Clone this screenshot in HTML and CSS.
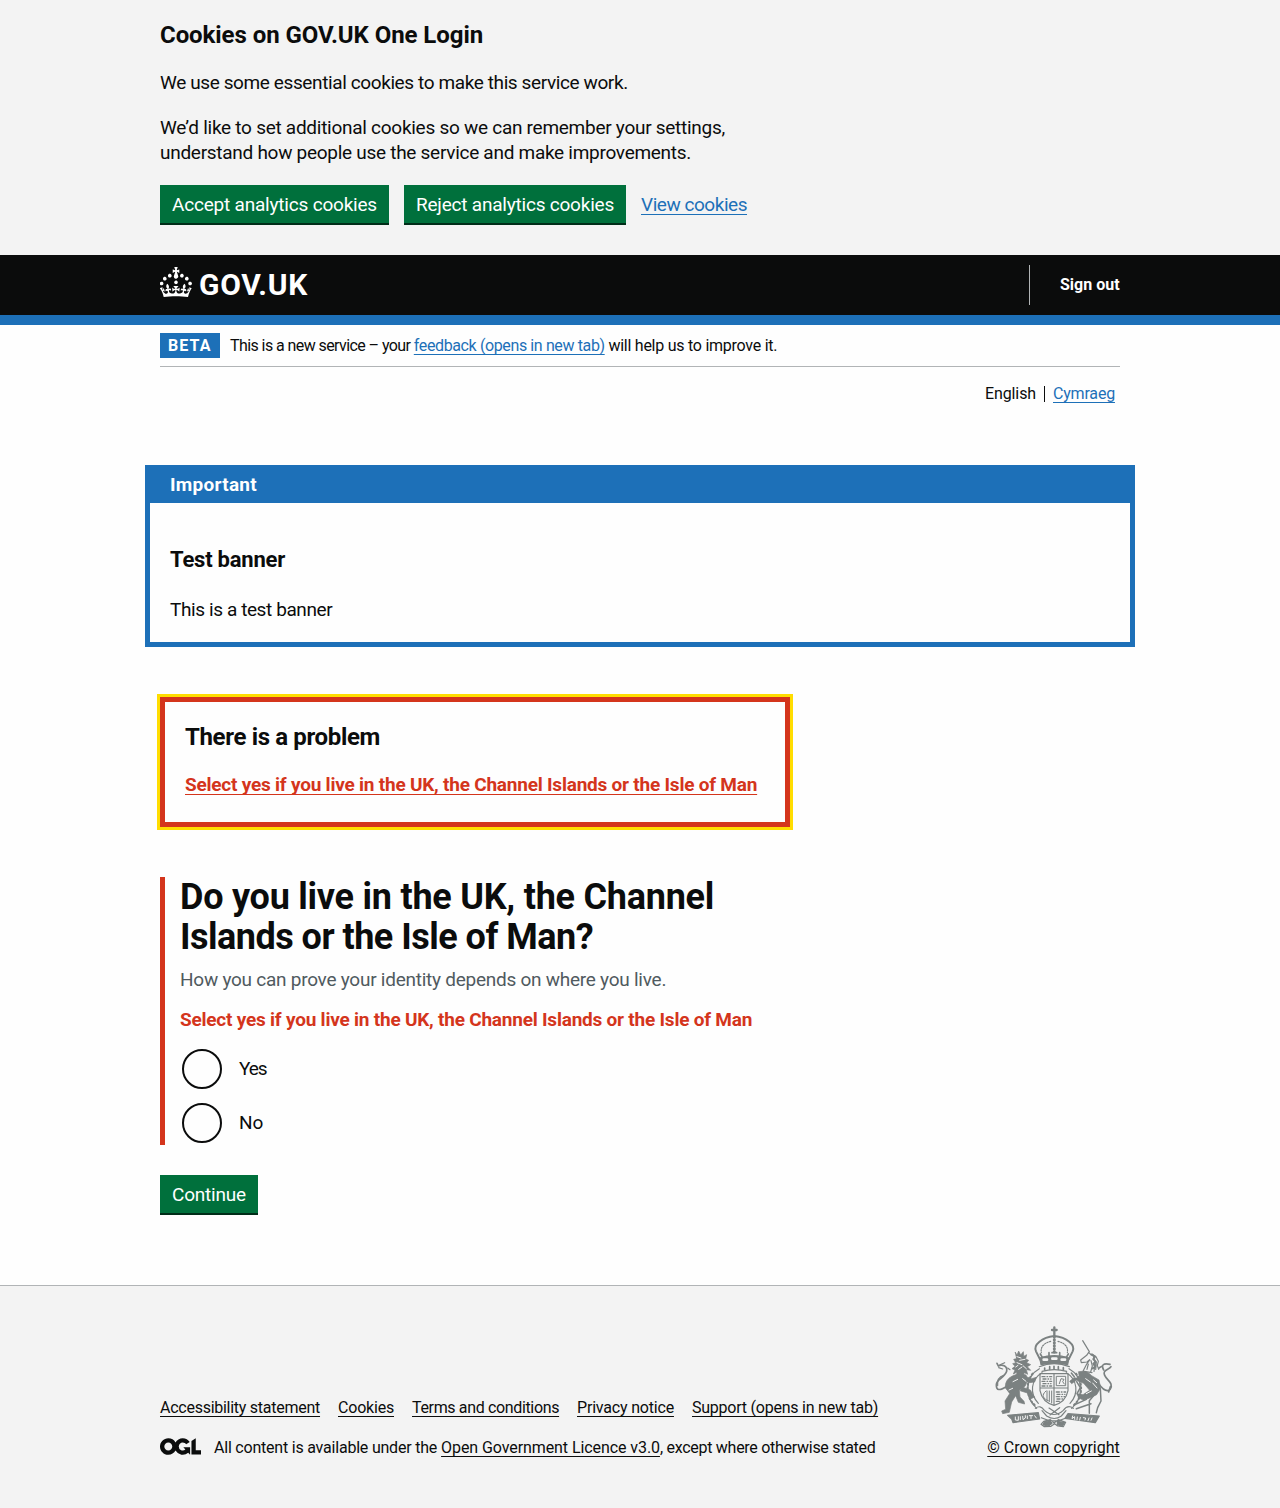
FILE: index.html
```html
<!DOCTYPE html>
<html lang="en">
<head>
<meta charset="utf-8">
<title>Do you live in the UK, the Channel Islands or the Isle of Man? – GOV.UK One Login</title>
<link rel="stylesheet" href="styles.css">
</head>
<body>
<section class="cookie-banner" aria-label="Cookies on GOV.UK One Login">
  <div class="container">
    <h2 class="cookie-title">Cookies on GOV.UK One Login</h2>
    <p class="cookie-intro">We use some essential cookies to make this service work.</p>
    <p class="cookie-detail">We’d like to set additional cookies so we can remember your settings,<br><span class="cookie-detail-end">understand how people use the service and make improvements.</span></p>
    <div class="button-group">
      <button class="button button-accept" type="button">Accept analytics cookies</button>
      <button class="button button-reject" type="button">Reject analytics cookies</button>
      <a class="link cookie-link" href="#">View cookies</a>
    </div>
  </div>
</section>

<header class="header">
  <div class="container header-row">
    <a class="logo" href="#">
      <svg class="crown" viewBox="0 0 32 30" width="32" height="30" fill="currentColor" aria-hidden="true"><path d="M22.6 10.4c-1 .4-2-.1-2.4-1-.4-.9.1-2 1-2.4.9-.4 2 .1 2.4 1s-.1 2-1 2.4m-5.9 6.7c-.9.4-2-.1-2.4-1-.4-.9.1-2 1-2.4.9-.4 2 .1 2.4 1s-.1 2-1 2.4m10.8-3.7c-1 .4-2-.1-2.4-1-.4-.9.1-2 1-2.4.9-.4 2 .1 2.4 1s0 2-1 2.4m3.3 4.8c-1 .4-2-.1-2.4-1-.4-.9.1-2 1-2.4.9-.4 2 .1 2.4 1s-.1 2-1 2.4M17 4.7l2.3 1.2V2.5l-2.3.7-.2-.2.9-3h-3.4l.9 3-.2.2c-.1.1-2.3-.7-2.3-.7v3.4L15 4.7c.1.1.1.2.2.2l-1.3 4c-.1.2-.1.4-.1.6 0 1.1.8 2 1.9 2.2h.7c1-.2 1.9-1.1 1.9-2.1 0-.2 0-.4-.1-.6l-1.3-4c-.1-.2-.2-.2-.2-.3m-7.6 5.7c.9.4 2-.1 2.4-1 .4-.9-.1-2-1-2.4-.9-.4-2 .1-2.4 1s0 2 1 2.4m-5 3c.9.4 2-.1 2.4-1 .4-.9-.1-2-1-2.4-.9-.4-2 .1-2.4 1s.1 2 1 2.4m-3.2 4.8c.9.4 2-.1 2.4-1 .4-.9-.1-2-1-2.4-.9-.4-2 .1-2.4 1s0 2 1 2.4m14.8 11c4.4 0 8.6.3 12.3.8 1.1-4.5 2.4-7 3.7-8.8l-2.5-.9c.2 1.3.3 1.9 0 2.7-.4-.4-.8-1.1-1.1-2.3l-1.2 4c.7-.5 1.3-.8 2-.9-1.1 2.5-2.6 3.1-3.5 3-1.1-.2-1.7-1.2-1.5-2.1.3-1.2 1.5-1.5 2.1-.1 1.1-2.3-.8-3-2-2.3 1.9-1.9 2.1-3.5.6-5.6-2.1 1.6-2.1 3.2-1.2 5.5-1.2-1.4-3.2-.6-2.5 1.6.9-1.4 2.1-.5 1.9.8-.2 1.1-1.7 2.1-3.5 1.9-2.7-.2-2.9-2.1-2.9-3.6.7-.1 1.9.5 2.9 1.9l.4-4.3c-1.1 1.1-2.1 1.4-3.2 1.4.4-1.2 2.1-3 2.1-3h-5.4s1.7 1.9 2.1 3c-1.1 0-2.1-.2-3.2-1.4l.4 4.3c1-1.4 2.2-2 2.9-1.9-.1 1.5-.2 3.4-2.9 3.6-1.9.2-3.4-.8-3.5-1.9-.2-1.3 1-2.2 1.9-.8.7-2.3-1.2-3-2.5-1.6.9-2.2.9-3.9-1.2-5.5-1.5 2-1.3 3.7.6 5.6-1.2-.7-3.1 0-2 2.3.6-1.4 1.8-1.1 2.1.1.2.9-.3 1.9-1.5 2.1-.9.2-2.4-.5-3.5-3 .6 0 1.2.3 2 .9l-1.2-4c-.3 1.1-.7 1.9-1.1 2.3-.3-.8-.2-1.4 0-2.7l-2.9.9C1.3 23 2.6 25.5 3.7 30c3.7-.5 7.9-.8 12.3-.8"/></svg>
      <span class="logo-text">GOV.UK</span>
    </a>
    <div class="sign-out"><a href="#">Sign out</a></div>
  </div>
</header>

<div class="container">
  <div class="phase-banner">
    <strong class="tag">BETA</strong>
    <p class="phase-text"><span class="phase-start">This is a new service – your </span><a class="link phase-link" href="#">feedback (opens in new tab)</a><span class="phase-end"> will help us to improve it.</span></p>
  </div>
  <nav class="languages" aria-label="Choose a language">
    <span class="language-current">English</span>
    <a class="link language-other" href="#">Cymraeg</a>
  </nav>

  <section class="notification">
    <h2 class="notification-title">Important</h2>
    <div class="notification-body">
      <h3 class="notification-heading">Test banner</h3>
      <p class="notification-text">This is a test banner</p>
    </div>
  </section>

  <main class="column">
    <div class="error-summary" role="alert">
      <h2 class="error-title">There is a problem</h2>
      <a class="error-link" href="#live">Select yes if you live in the UK, the Channel Islands or the Isle of Man</a>
    </div>

    <form>
      <div class="form-group" id="live">
        <h1 class="question">Do you live in the UK, the Channel<br><span class="question-end">Islands or the Isle of Man?</span></h1>
        <p class="hint">How you can prove your identity depends on where you live.</p>
        <p class="error-message">Select yes if you live in the UK, the Channel Islands or the Isle of Man</p>
        <div class="radios">
          <label class="radio"><input class="radio-input" type="radio" name="live"><span class="radio-yes">Yes</span></label>
          <label class="radio"><input class="radio-input" type="radio" name="live"><span class="radio-no">No</span></label>
        </div>
      </div>
      <button class="button button-continue" type="button">Continue</button>
    </form>
  </main>
</div>

<footer class="footer">
  <div class="container footer-row">
    <div class="footer-meta">
      <nav class="footer-links">
        <a class="f1" href="#">Accessibility statement</a>
        <a class="f2" href="#">Cookies</a>
        <a class="f3" href="#">Terms and conditions</a>
        <a class="f4" href="#">Privacy notice</a>
        <a class="f5" href="#">Support (opens in new tab)</a>
      </nav>
      <div class="licence">
        <svg class="ogl" viewBox="0 0 483.2 195.7" width="41" height="17" fill="currentColor" aria-hidden="true"><path d="M421.5 142.8V.1l-50.7 32.3v161.1h112.4v-50.7zm-122.3-9.6A47.12 47.12 0 0 1 221 97.8c0-26 21.1-47.1 47.1-47.1 16.7 0 31.4 8.7 39.7 21.8l42.7-27.2A97.63 97.63 0 0 0 268.1 0c-36.5 0-68.3 20.1-85.1 49.7A98 98 0 0 0 97.8 0C43.9 0 0 43.9 0 97.8s43.9 97.8 97.8 97.8c36.5 0 68.3-20.1 85.1-49.7a97.76 97.76 0 0 0 149.6 25.4l19.4 22.2h3v-87.8h-80l24.3 27.5zM97.8 145c-26 0-47.1-21.1-47.1-47.1s21.1-47.1 47.1-47.1 47.1 21.1 47.1 47.1S123.8 145 97.8 145"/></svg>
        <p><span class="licence-start">All content is available under the</span> <a class="licence-link" href="#">Open Government Licence v3.0</a><span class="licence-end">, except where otherwise stated</span></p>
      </div>
    </div>
    <div class="crown-copyright">
      <svg class="crest" viewBox="42 29 360 315" width="120" height="105" aria-hidden="true" fill="none" stroke="#7b8181" stroke-width="3.5" stroke-linecap="round" stroke-linejoin="round">
        <!-- crown -->
        <path d="M223 36v22M216 44h14" stroke-width="7"/>
        <path d="M223 62C186 66 159 88 168 108L180 132M223 62c37 4 64 26 55 46L266 132" stroke-width="6"/>
        <path d="M212 78C190 84 181 96 184 112M234 78c22 6 31 18 28 34" stroke-dasharray="4 4"/>
        <path d="M223 64v50" stroke-width="9" stroke-dasharray="1 8"/>
        <path d="M181 116l6 10h72l6-10M207 112v18M239 112v18M216 112h14" stroke-width="5"/>
        <path d="M179 128q44-14 88 0l-4 20q-40-9-80 0z" fill="#7b8181"/>
        <path d="M191 133h10M217 130h12M245 133h10" stroke="#f3f3f3" stroke-width="8"/>
        <!-- garter and shield -->
        <path d="M178 160C135 184 132 246 170 279M267 160c43 24 46 86 8 119M186 172c-34 20-38 64-11 92M259 172c34 20 38 64 11 92"/>
        <path d="M158 175C134 205 140 248 164 269M288 175c24 30 18 73-6 94" stroke-width="6" stroke-dasharray="4 7"/>
        <path d="M178 154q44-18 90 0M186 168q37-10 74 0"/>
        <path d="M194 158v6M209 154v8M235 154v8M250 157v7M222 153v8" stroke-width="5"/>
        <path d="M180 175h84v51q-7 35-42 44q-35-9-42-44zM222 175v95M180 218h84"/>
        <path d="M186 184h29M189 191h24M186 198h29M189 205h24M186 212h29M229 230h28M231 237h24M229 244h26M231 251h18M229 258h10" stroke-width="4" stroke-dasharray="9 6 2 6"/>
        <path d="M230 183h27v28h-27zM238 205l5-15 9 2-4 7 5 7M198 227c-16 13-8 24 7 29M201 227v28M208 227v32M215 227v36" stroke-width="3"/>
        <path d="M166 279q15-12 27 6q29 25 57 0q13-18 30-6M186 286l14 16q23 15 44 0l14-16M207 278l30 20M239 277l-29 22"/>
        <!-- lion -->
        <g fill="#7b8181" stroke-width="2">
          <path d="M106 111l5 8 5-12 6 12 8-10 1 14 9-5-3 13 9 4-6 7 12 6-10 6 10 11-13-2 4 14-10-5-5 13-8-11-9 11-1-14-10 5 5-12-9-4 9-7-7-8 9-3-6-10 8-2z"/>
          <path d="M76 217q-2-24 21-35l21-8 20 5 6 15-9 19-17 12 2 20 12 13 2 8-19-5-8-20-12 19-7 31-20 4-3-8 12-5-2-25 14-22z"/>
          <path d="M130 181l25 9 14-4-5 14-15 2-20-7M126 215l25 9 12 21-11 6-10-18-22-7"/>
        </g>
        <path d="M82 212Q48 235 49 208c0-17 25-20 31-40 3-17-15-22-25-16l-4-8" stroke-width="5"/>
        <path d="M53 211q-3-25 18-31M83 158l7 5M60 148l14-6M56 157l12 4"/>
        <path d="M111 124l12 4M119 135l16-3M111 142l15 6M130 152l9 8M116 162l10-7M107 155l7-5M99 199l14-7M87 224l11-5M104 253l8 9M128 190l10 8" stroke="#f3f3f3" stroke-width="3"/>
        <!-- unicorn -->
        <path d="M308 76l20 33" stroke-width="3.5"/>
        <path d="M326 111l-6 9-18 14 2 8 17-2 8-7M326 111l8 8M329 134l-10 14-10 20M336 116l12 8 7 14-3 12 4 12M341 124l4 20-3 24M333 136l4 16-5 18M349 140l-2 22M325 146l-4 16M312 168l24 4"/>
        <path d="M335 118l10 6-5 7 7 8-7 6 6 9-8 5" stroke-width="6"/>
        <g fill="#7b8181" stroke-width="2">
          <path d="M296 169q24-5 39 12l22 13 5 24-12 20-19 9-20 8-16-8-3-12 17 3 20-13-18-21-22-9-14 10-6-7 13-11 16 2z"/>
        </g>
        <path d="M283 184l-9-11M290 199l11 18-10 18 9 10M350 230l-22 26v38M361 220l2 37-10 20-4 15M319 252l-34 16M333 265l-44 15" stroke-width="4.5"/>
        <path d="M356 205q20 28 34 18c17-22-24-35-17-53 4-8 16-8 20-16M371 164q-12-23 19-17M365 153l-8 5M386 230l5-16" stroke-width="5"/>
        <path d="M317 190l14 10M338 203l13 15M319 235l15-8M341 194l9 8" stroke="#f3f3f3" stroke-width="3"/>
        <!-- motto scroll -->
        <path d="M83 300l92-8 4 19-80 11-4-11zM264 295l94 7-12 20-91-13z" fill="#7b8181"/>
        <path d="M106 305v9l9 1v-11M121 304v9M128 303l1 10 7-5v-7M142 302v8M148 301h10M153 301v9M164 301l5 7M278 302l-2 8 8-6v8M292 305l-1 8M301 306l-2 8M310 307l7 1-2 6M327 308l-3 8M336 308l-3 7" stroke="#f3f3f3" stroke-width="3"/>
        <path d="M184 307q38 19 76 0M191 318l20-5 11 10 13-10 22 8-7 13-17-2-9-7-11 8-20 1-10-7z"/>
        <path d="M193 319l17-3 6 8-10 8-17-3zM232 318l22 4-7 10-15-3z" fill="#7b8181"/>
      </svg>
      <a href="#">© Crown copyright</a>
    </div>
  </div>
</footer>
</body>
</html>
```
FILE: styles.css
```css
* { box-sizing: border-box; }
body {
  margin: 0;
  background: #fefefe;
  color: #0b0c0c;
  font-family: Roboto, "Liberation Sans", sans-serif;
  font-size: 19px;
  line-height: 25px;
}
h1, h2, h3, p { margin: 0; }
.container { width: 960px; margin: 0 auto; }
a {
  color: inherit;
  text-decoration-thickness: 1px;
  text-underline-offset: 3px;
  text-decoration-skip-ink: none;
}
.link { color: #1d70b8; }

/* Cookie banner */
.cookie-banner { background: #f3f3f3; height: 255px; padding-top: 20px; }
.cookie-title { font-size: 24px; line-height: 30px; letter-spacing: -.07px; margin-bottom: 20px; }
.cookie-intro { letter-spacing: -.39px; margin-bottom: 20px; }
.cookie-detail { letter-spacing: -.27px; margin-bottom: 20px; }
.cookie-detail-end { letter-spacing: -.28px; }
.button-group { display: flex; gap: 15px; align-items: flex-start; }
.cookie-link { margin-top: 7px; letter-spacing: -.46px; }
.button {
  display: block;
  height: 38px;
  padding: 1px 0 0;
  border: 0;
  background: #00703c;
  box-shadow: 0 2px 0 #002d18;
  color: #fff;
  font: inherit;
  line-height: 37px;
  white-space: nowrap;
}
.button-accept { width: 229px; letter-spacing: -.2px; }
.button-reject { width: 222px; letter-spacing: -.21px; }
.button-continue { width: 98px; letter-spacing: -.2px; }

/* Header */
.header { background: #0b0c0c; border-bottom: 10px solid #1d70b8; height: 70px; color: #fff; }
.header-row { display: flex; justify-content: space-between; align-items: center; height: 60px; }
.logo { display: flex; align-items: center; gap: 7px; text-decoration: none; }
.crown { margin-bottom: 6px; }
.logo-text { font-size: 30px; font-weight: 700; line-height: 30px; letter-spacing: .7px; }
.sign-out {
  width: 91px;
  height: 40px;
  border-left: 1px solid #b1b4b6;
  padding-left: 30px;
  font-size: 16px;
  font-weight: 700;
  line-height: 39px;
  white-space: nowrap;
}
.sign-out a { text-decoration: none; }

/* Phase banner and language switch */
.phase-banner {
  display: flex;
  gap: 10px;
  height: 42px;
  padding-top: 8px;
  border-bottom: 1px solid #b1b4b6;
  font-size: 16px;
}
.tag {
  width: 60px;
  height: 25px;
  padding-left: 8px;
  background: #1d70b8;
  color: #fff;
  letter-spacing: 1.1px;
}
.phase-start { letter-spacing: -.58px; }
.phase-link { letter-spacing: -.38px; }
.phase-end { letter-spacing: -.25px; }
.languages {
  display: flex;
  justify-content: flex-end;
  align-items: center;
  height: 20px;
  margin: 17px 5px 0 0;
  font-size: 16px;
  line-height: 20px;
}
.language-current { width: 51px; letter-spacing: -.11px; }
.language-other { position: relative; width: 62px; margin-left: 17px; letter-spacing: -.19px; }
.language-other::before {
  content: "";
  position: absolute;
  left: -9px;
  top: 2px;
  width: 1px;
  height: 16px;
  background: #0b0c0c;
}

/* Notification */
.notification { margin: 61px -15px 50px; height: 182px; border: 5px solid #1d70b8; }
.notification-title {
  height: 33px;
  padding-left: 20px;
  background: #1d70b8;
  color: #fff;
  font-size: 19px;
  line-height: 29px;
  letter-spacing: .27px;
}
.notification-body { padding: 42px 20px 0; }
.notification-heading { font-size: 22px; line-height: 30px; letter-spacing: -.23px; margin-bottom: 22px; }
.notification-text { letter-spacing: -.4px; }

/* Error summary and question */
.column { width: 630px; }
.error-summary {
  height: 130px;
  margin-bottom: 50px;
  padding: 20px;
  border: 5px solid #d4351c;
  outline: 3px solid #fd0;
}
.error-title { font-size: 24px; line-height: 30px; letter-spacing: -.35px; margin-bottom: 20px; }
.error-link { display: block; color: #d4351c; font-weight: 700; letter-spacing: -.22px; white-space: nowrap; }
.form-group { height: 268px; margin-bottom: 30px; padding-left: 15px; border-left: 5px solid #d4351c; }
.question { font-size: 36px; line-height: 40px; letter-spacing: -.24px; margin-bottom: 10px; white-space: nowrap; }
.question-end { letter-spacing: -.51px; }
.hint { color: #505a5f; letter-spacing: -.25px; margin-bottom: 15px; }
.error-message { color: #d4351c; font-weight: 700; letter-spacing: -.22px; margin-bottom: 17px; white-space: nowrap; }
.radios { display: grid; gap: 14px; padding-left: 2px; }
.radio { display: flex; align-items: center; gap: 17px; height: 40px; line-height: 24px; }
.radio-input {
  appearance: none;
  width: 40px;
  height: 40px;
  margin: 0;
  border: 2px solid #0b0c0c;
  border-radius: 50%;
}
.radio-yes { letter-spacing: -1.1px; }

/* Footer */
.footer {
  height: 223px;
  margin-top: 72px;
  border-top: 1px solid #b1b4b6;
  background: #f3f3f3;
  font-size: 16px;
  line-height: 20px;
}
.footer-row { display: flex; justify-content: space-between; align-items: flex-end; padding-top: 39px; }
.footer-meta { display: grid; gap: 20px; white-space: nowrap; }
.footer-links { display: flex; gap: 18px; }
.f1 { width: 160px; letter-spacing: -.26px; }
.f2 { width: 56px; letter-spacing: -.2px; }
.f3 { width: 147px; letter-spacing: -.35px; }
.f4 { width: 97px; letter-spacing: -.19px; }
.f5 { letter-spacing: -.23px; }
.licence { display: flex; gap: 13px; }
.licence-start { letter-spacing: -.21px; }
.licence-link { letter-spacing: -.08px; }
.licence-end { letter-spacing: -.28px; }
.crown-copyright { display: flex; flex-direction: column; align-items: center; gap: 8px; width: 133px; white-space: nowrap; }
.crest { display: block; }
```
